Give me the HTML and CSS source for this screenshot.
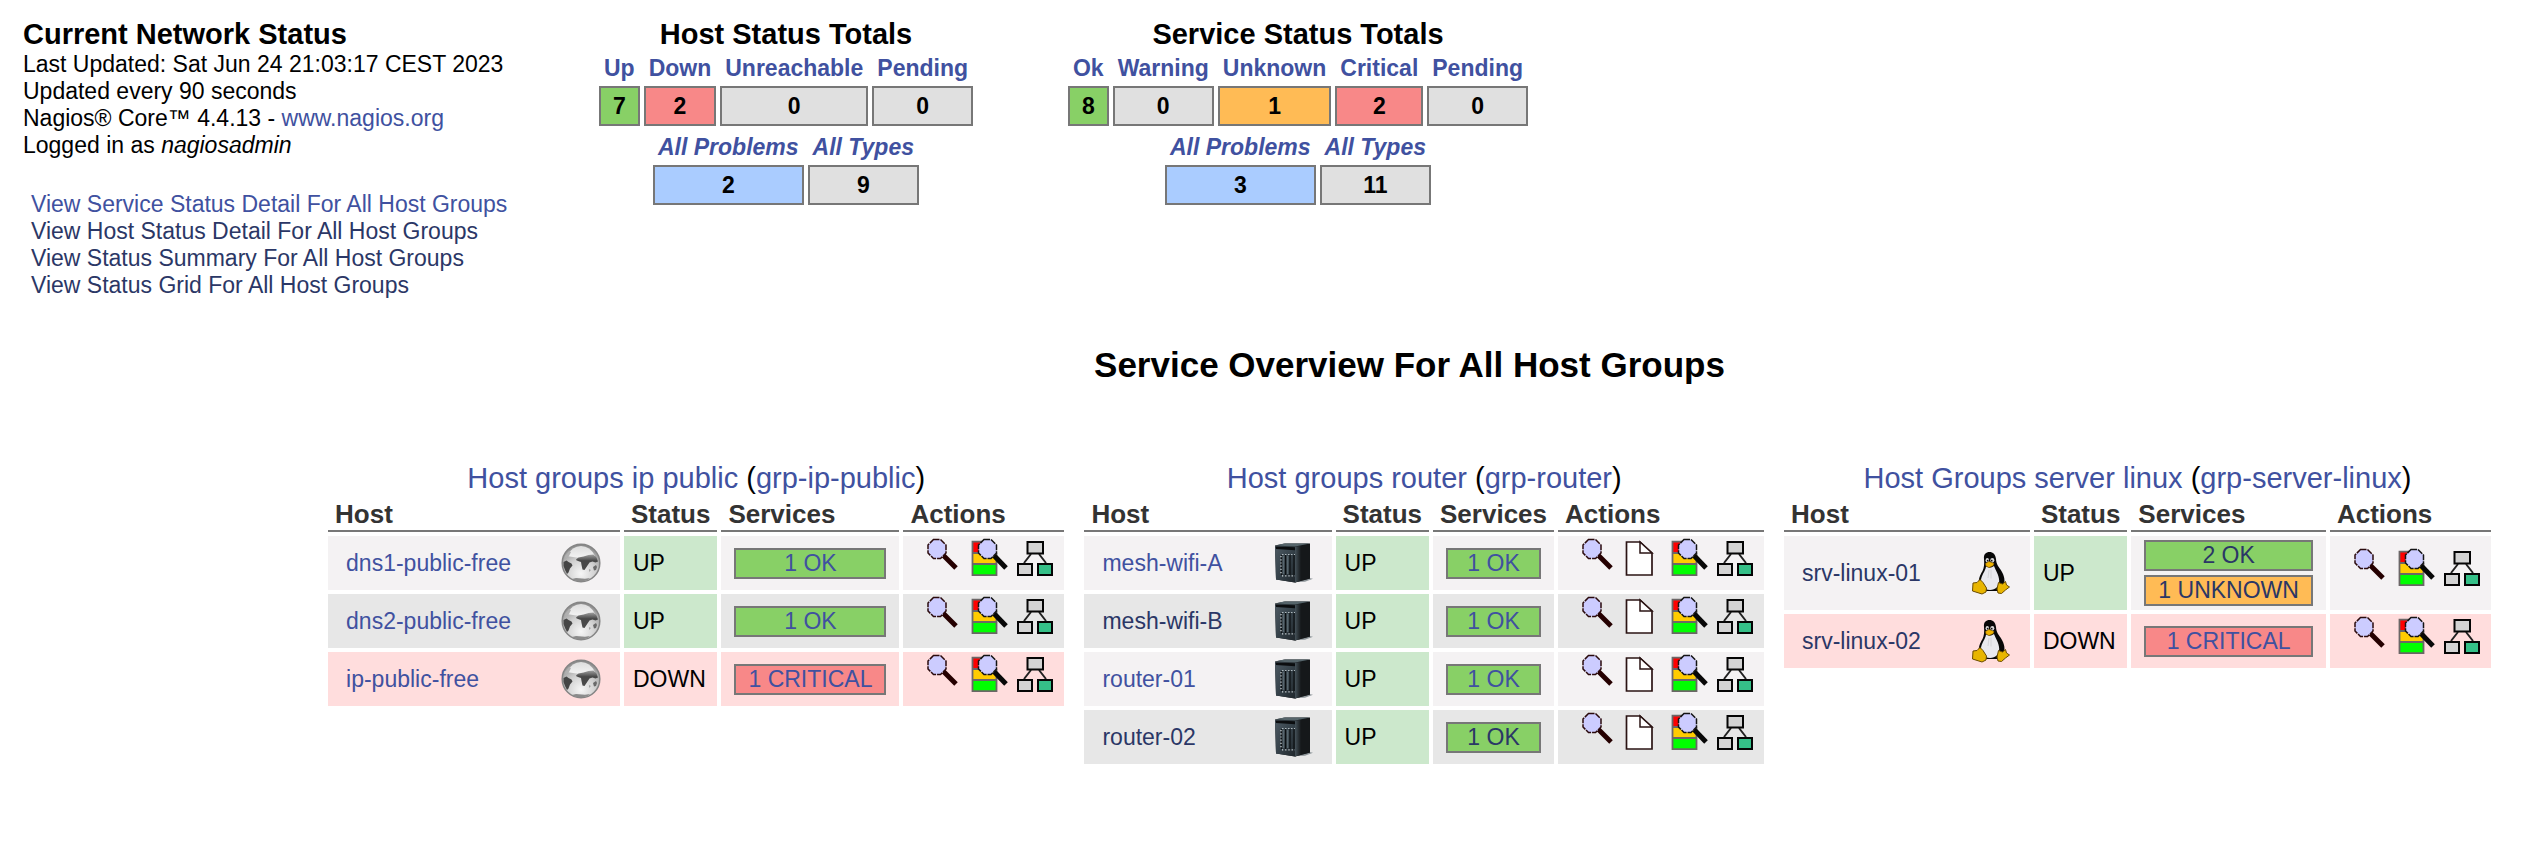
FILE: index.html
```html
<!DOCTYPE html>
<html lang="en">
<head>
<meta charset="utf-8">
<title>Current Network Status</title>
<link rel="stylesheet" href="styles.css">
</head>
<body>
<svg class="sprite" aria-hidden="true">
  <defs>
    <radialGradient id="globe-fill" cx="50%" cy="78%" r="75%">
      <stop offset="0" stop-color="#f6f6f6"/>
      <stop offset="0.5" stop-color="#d2d2d2"/>
      <stop offset="0.85" stop-color="#a2a2a2"/>
      <stop offset="1" stop-color="#8a8a8a"/>
    </radialGradient>
    <linearGradient id="globe-shine" x1="0" y1="0" x2="0" y2="1">
      <stop offset="0" stop-color="#dddddd"/>
      <stop offset="1" stop-color="#f4f4f4"/>
    </linearGradient>
    <linearGradient id="land" x1="0" y1="0" x2="0" y2="1">
      <stop offset="0" stop-color="#a0a0a0"/>
      <stop offset="0.4" stop-color="#484848"/>
      <stop offset="1" stop-color="#4a4a4a"/>
    </linearGradient>
    <linearGradient id="front" x1="0" y1="0" x2="1" y2="1">
      <stop offset="0" stop-color="#4d5a63"/>
      <stop offset="0.5" stop-color="#36424a"/>
      <stop offset="1" stop-color="#20272c"/>
    </linearGradient>
    <linearGradient id="shade" x1="0" y1="0" x2="1" y2="0">
      <stop offset="0" stop-color="#45525a"/>
      <stop offset="1" stop-color="#45525a" stop-opacity="0"/>
    </linearGradient>
  </defs>
  <symbol id="globe" viewBox="0 0 40 40">
    <circle cx="20" cy="20" r="18.8" fill="url(#globe-fill)" stroke="#858585" stroke-width="1.5"/>
    <path d="M6 13Q11 3 20 3t14 10Q29 16 20 15T6 13z" fill="url(#globe-shine)"/>
    <path d="M2.500 19l3-1.500 2 1.500 3 1.500 1 2-2.500 3-1.500 4-1.500 1.500-2-4-1.500-4z" fill="#454545"/>
    <path d="M4 13l4-5 2 1-2 4-3 3z" fill="#b0b0b0"/>
    <path d="M15.500 16l2-1.500 5-1 5-1.500 5-.5 3 3 1.500 4-2.500 1-3-1-3 1-2 3-3 4.500-2-.5-1-4.500-.5-3-3-1-2-1z" fill="url(#land)"/>
    <path d="M32 24l3-2 1 2-1 3-2 .5zM28.500 26l1 1-1 2z" fill="#6a6a6a"/>
    <path d="M11 36l4-1 9 .8 5-.8-3 2.500-6 1-6-.8z" fill="#8b8b8b"/>
  </symbol>
  <symbol id="server" viewBox="0 0 40 40">
    <path d="M24 39l12-4 4 .7-8 3z" fill="#59656b" opacity="0.65"/>
    <path d="M2 2.500L12 .5h25v35L22 39.500 3 36.500z" fill="#171b1e"/>
    <path d="M2 3l20 .8v35.700l-19-3z" fill="url(#front)"/>
    <path d="M22 3.800L37 1v34.500l-15 4z" fill="#15181a"/>
    <path d="M22 3.800l6-1v35l-6 1.700z" fill="url(#shade)"/>
    <path d="M2 2.500L11 .5h26l-15 3z" fill="#56656b"/>
    <path d="M2.500 3.500l19.500.7v3L3 6z" fill="#0b0d0f"/>
    <path d="M8.500 12v20M12.500 11.500v20.500M17 12v20M21 12v20" stroke="#0c1012" stroke-width="1.200" fill="none"/>
    <path d="M9 11.500h13" stroke="#aeb8bc" stroke-width="1" stroke-dasharray="1.500 1.500"/>
    <path d="M8 13v19M9 32.800h13" stroke="#d3dadd" stroke-width="1.200" stroke-dasharray="1.200 2" fill="none"/>
    <path d="M10.500 13v18M14.700 13v18" stroke="#58666d" stroke-width="1.500"/>
  </symbol>
  <symbol id="tux" viewBox="0 0 40 44">
    <path d="M13 8C12.500 3 15 1 18.500 1S24.500 3.500 25 8c.3 5 2 7 4.500 10.500 3 4.500 5 9.500 3.500 15L30 40H11L8 33c-1-4 1-9 3.500-13C13 17 13.500 13 13 8z" fill="#080808"/>
    <path d="M15 15.500q4 2.500 8-.5c1.500 4 5 9 5.200 14.500 0 6-3.700 9.500-9.200 9.500S9.500 35 10 29c.5-5 4.500-9 5-13.500z" fill="#e9e9ee"/>
    <path d="M18 19l-1 8M20 18.500v9" stroke="#d4d4d8" stroke-width="1"/>
    <ellipse cx="16.300" cy="9.300" rx="1.700" ry="2.300" fill="#d8d8d8"/>
    <ellipse cx="21.300" cy="9.300" rx="2" ry="2.400" fill="#d8d8d8"/>
    <circle cx="16.700" cy="9.700" r=".9" fill="#111"/>
    <circle cx="20.700" cy="9.700" r=".9" fill="#111"/>
    <path d="M14.500 12.500l3.500-2 5 2-.8 2L18 16.500l-3-1.500z" fill="#f0b400" stroke="#8a6200" stroke-width=".5"/>
    <path d="M2 32l4-.5 3-3 3 3 3.500 5.500-.5 4-4 2-9.500-3z" fill="#e8b500" stroke="#6b4c00" stroke-width="1"/>
    <path d="M27.500 31.500l4 1.500 3-2.500 1 3.500 3 2-4 3-4 3.500-3.500-.5-1-4z" fill="#e8b500" stroke="#6b4c00" stroke-width="1"/>
  </symbol>
  <symbol id="magnifier" viewBox="0 0 38 40">
    <path d="M18.500 18.500L31 31" stroke="#250000" stroke-width="5"/>
    <path d="M8.500 2.500h7l5.500 5.500v8l-5.500 5.500h-7L3 16V8z" fill="#ccccff" stroke="#2a0a0c" stroke-width="1.500" stroke-dasharray="6 1"/>
  </symbol>
  <symbol id="document" viewBox="0 0 38 40">
    <path d="M1.500 5H15l12 11v22H1.500z" fill="#ffffff" stroke="#2b1414" stroke-width="1.700"/>
    <path d="M15 5v11h12z" fill="#ffffff" stroke="#2b1414" stroke-width="1.500"/>
  </symbol>
  <symbol id="status" viewBox="0 0 38 40">
    <path d="M2.500 5H12v11H2.500z" fill="#ff0000"/>
    <path d="M2.500 16h24v11h-24z" fill="#ffcc00"/>
    <path d="M2.500 27h24v11h-24z" fill="#00ff00"/>
    <path d="M12 4.700H2.500v33.500h24V16M2.500 16h24M2.500 27h24" fill="none" stroke="#6b6666" stroke-width="1.800"/>
    <path d="M24 18.500L36 31" stroke="#080808" stroke-width="5"/>
    <path d="M14 2.500h7l5.500 5.500v8L21 21.500h-7L8.500 16V8z" fill="#ccccff" stroke="#141414" stroke-width="1.500" stroke-dasharray="6 1"/>
  </symbol>
  <symbol id="tree" viewBox="0 0 38 40">
    <path d="M16 17l-7 9M24 17l7 9" stroke="#222222" stroke-width="2"/>
    <path d="M12.500 5h15.500v11.500H12.500zM3 27h14v11H3z" fill="#d3d3d3" stroke="#050505" stroke-width="2"/>
    <path d="M23 27h14v11H23z" fill="#35c088" stroke="#050505" stroke-width="2"/>
  </symbol>
</svg>

<header class="summary">
  <section class="info">
    <h2 class="heading">Current Network Status</h2>
    <p>Last Updated: Sat Jun 24 21:03:17 CEST 2023</p>
    <p>Updated every 90 seconds</p>
    <p>Nagios® Core™ 4.4.13 - <a href="#">www.nagios.org</a></p>
    <p>Logged in as <i>nagiosadmin</i></p>
    <nav class="views">
      <a href="#">View Service Status Detail For All Host Groups</a>
      <a href="#" class="seen">View Host Status Detail For All Host Groups</a>
      <a href="#" class="seen">View Status Summary For All Host Groups</a>
      <a href="#" class="seen">View Status Grid For All Host Groups</a>
    </nav>
  </section>

  <section class="totals">
    <h2 class="heading">Host Status Totals</h2>
    <table class="counts">
      <tr><th><a href="#">Up</a></th><th><a href="#">Down</a></th><th><a href="#">Unreachable</a></th><th><a href="#">Pending</a></th></tr>
      <tr><td class="ok">7</td><td class="critical">2</td><td>0</td><td>0</td></tr>
    </table>
    <table class="counts overall">
      <tr><th><a href="#">All Problems</a></th><th><a href="#">All Types</a></th></tr>
      <tr><td class="problems">2</td><td>9</td></tr>
    </table>
  </section>

  <section class="totals">
    <h2 class="heading">Service Status Totals</h2>
    <table class="counts">
      <tr><th><a href="#">Ok</a></th><th><a href="#">Warning</a></th><th><a href="#">Unknown</a></th><th><a href="#">Critical</a></th><th><a href="#">Pending</a></th></tr>
      <tr><td class="ok">8</td><td>0</td><td class="unknown">1</td><td class="critical">2</td><td>0</td></tr>
    </table>
    <table class="counts overall">
      <tr><th><a href="#">All Problems</a></th><th><a href="#">All Types</a></th></tr>
      <tr><td class="problems">3</td><td>11</td></tr>
    </table>
  </section>
</header>

<main class="overview">
  <h1 class="title">Service Overview For All Host Groups</h1>
  <div class="groups">
    <table class="group">
      <caption><a href="#">Host groups ip public</a> (<a href="#">grp-ip-public</a>)</caption>
      <thead><tr><th>Host</th><th>Status</th><th>Services</th><th>Actions</th></tr></thead>
      <tbody>
        <tr class="even">
          <td><div class="host"><a href="#">dns1-public-free</a><svg class="host-icon"><use href="#globe"/></svg></div></td>
          <td class="state up">UP</td>
          <td class="services"><a href="#" class="badge ok">1 OK</a></td>
          <td><div class="actions"><a href="#" aria-label="Details"><svg><use href="#magnifier"/></svg></a><a href="#" aria-label="Services"><svg><use href="#status"/></svg></a><a href="#" aria-label="Map"><svg><use href="#tree"/></svg></a></div></td>
        </tr>
        <tr class="odd">
          <td><div class="host"><a href="#">dns2-public-free</a><svg class="host-icon"><use href="#globe"/></svg></div></td>
          <td class="state up">UP</td>
          <td class="services"><a href="#" class="badge ok">1 OK</a></td>
          <td><div class="actions"><a href="#" aria-label="Details"><svg><use href="#magnifier"/></svg></a><a href="#" aria-label="Services"><svg><use href="#status"/></svg></a><a href="#" aria-label="Map"><svg><use href="#tree"/></svg></a></div></td>
        </tr>
        <tr class="down">
          <td><div class="host"><a href="#">ip-public-free</a><svg class="host-icon"><use href="#globe"/></svg></div></td>
          <td class="state">DOWN</td>
          <td class="services"><a href="#" class="badge critical">1 CRITICAL</a></td>
          <td><div class="actions"><a href="#" aria-label="Details"><svg><use href="#magnifier"/></svg></a><a href="#" aria-label="Services"><svg><use href="#status"/></svg></a><a href="#" aria-label="Map"><svg><use href="#tree"/></svg></a></div></td>
        </tr>
      </tbody>
    </table>

    <table class="group">
      <caption><a href="#">Host groups router</a> (<a href="#">grp-router</a>)</caption>
      <thead><tr><th>Host</th><th>Status</th><th>Services</th><th>Actions</th></tr></thead>
      <tbody>
        <tr class="even">
          <td><div class="host"><a href="#">mesh-wifi-A</a><svg class="host-icon"><use href="#server"/></svg></div></td>
          <td class="state up">UP</td>
          <td class="services"><a href="#" class="badge ok">1 OK</a></td>
          <td><div class="actions"><a href="#" aria-label="Details"><svg><use href="#magnifier"/></svg></a><a href="#" aria-label="Notes"><svg><use href="#document"/></svg></a><a href="#" aria-label="Services"><svg><use href="#status"/></svg></a><a href="#" aria-label="Map"><svg><use href="#tree"/></svg></a></div></td>
        </tr>
        <tr class="odd">
          <td><div class="host"><a href="#" class="seen">mesh-wifi-B</a><svg class="host-icon"><use href="#server"/></svg></div></td>
          <td class="state up">UP</td>
          <td class="services"><a href="#" class="badge ok">1 OK</a></td>
          <td><div class="actions"><a href="#" aria-label="Details"><svg><use href="#magnifier"/></svg></a><a href="#" aria-label="Notes"><svg><use href="#document"/></svg></a><a href="#" aria-label="Services"><svg><use href="#status"/></svg></a><a href="#" aria-label="Map"><svg><use href="#tree"/></svg></a></div></td>
        </tr>
        <tr class="even">
          <td><div class="host"><a href="#">router-01</a><svg class="host-icon"><use href="#server"/></svg></div></td>
          <td class="state up">UP</td>
          <td class="services"><a href="#" class="badge ok">1 OK</a></td>
          <td><div class="actions"><a href="#" aria-label="Details"><svg><use href="#magnifier"/></svg></a><a href="#" aria-label="Notes"><svg><use href="#document"/></svg></a><a href="#" aria-label="Services"><svg><use href="#status"/></svg></a><a href="#" aria-label="Map"><svg><use href="#tree"/></svg></a></div></td>
        </tr>
        <tr class="odd">
          <td><div class="host"><a href="#" class="seen">router-02</a><svg class="host-icon"><use href="#server"/></svg></div></td>
          <td class="state up">UP</td>
          <td class="services"><a href="#" class="badge ok seen">1 OK</a></td>
          <td><div class="actions"><a href="#" aria-label="Details"><svg><use href="#magnifier"/></svg></a><a href="#" aria-label="Notes"><svg><use href="#document"/></svg></a><a href="#" aria-label="Services"><svg><use href="#status"/></svg></a><a href="#" aria-label="Map"><svg><use href="#tree"/></svg></a></div></td>
        </tr>
      </tbody>
    </table>

    <table class="group">
      <caption><a href="#">Host Groups server linux</a> (<a href="#">grp-server-linux</a>)</caption>
      <thead><tr><th>Host</th><th>Status</th><th>Services</th><th>Actions</th></tr></thead>
      <tbody>
        <tr class="even">
          <td><div class="host"><a href="#" class="seen">srv-linux-01</a><svg class="host-icon tall"><use href="#tux"/></svg></div></td>
          <td class="state up">UP</td>
          <td class="services"><a href="#" class="badge ok seen">2 OK</a><a href="#" class="badge unknown seen">1 UNKNOWN</a></td>
          <td><div class="actions"><a href="#" aria-label="Details"><svg><use href="#magnifier"/></svg></a><a href="#" aria-label="Services"><svg><use href="#status"/></svg></a><a href="#" aria-label="Map"><svg><use href="#tree"/></svg></a></div></td>
        </tr>
        <tr class="down">
          <td><div class="host"><a href="#" class="seen">srv-linux-02</a><svg class="host-icon tall"><use href="#tux"/></svg></div></td>
          <td class="state">DOWN</td>
          <td class="services"><a href="#" class="badge critical">1 CRITICAL</a></td>
          <td><div class="actions"><a href="#" aria-label="Details"><svg><use href="#magnifier"/></svg></a><a href="#" aria-label="Services"><svg><use href="#status"/></svg></a><a href="#" aria-label="Map"><svg><use href="#tree"/></svg></a></div></td>
        </tr>
      </tbody>
    </table>
  </div>
</main>
</body>
</html>
```

FILE: styles.css
```css
body {
  margin: 0;
  background: #ffffff;
  color: #000000;
  font: 23px/27px Arial, "Liberation Sans", sans-serif;
}

a {
  color: #4051a0;
  text-decoration: none;
}

a.seen {
  color: #2b3766;
}

p {
  margin: 0;
}

.sprite {
  position: absolute;
  width: 0;
  height: 0;
}

/* Status summary */

.summary {
  display: grid;
  grid-template-columns:
    minmax(max-content, 507fr) minmax(max-content, 512fr)
    minmax(max-content, 512fr) 975fr;
  padding: 18px 0 0 23px;
}

.heading {
  margin: 0;
  font-size: 29px;
  line-height: 32px;
}

.info .heading {
  line-height: 33px;
}

.views {
  display: flex;
  flex-direction: column;
  align-items: flex-start;
  padding: 32px 0 0 8px;
}

.totals {
  display: flex;
  flex-direction: column;
  align-items: center;
}

.counts {
  border-spacing: 4px;
  text-align: center;
}

.counts th {
  padding: 0 5px;
  font-size: 23px;
  line-height: 28px;
}

.counts td {
  padding: 4px 0;
  border: 2px solid #777777;
  background: #e0e0e0;
  font-weight: bold;
  line-height: 28px;
}

.overall {
  margin-top: -1px;
  font-style: italic;
}

.overall td {
  font-style: normal;
}

.counts .ok,
.badge.ok {
  background: #88d066;
}

.counts .critical,
.badge.critical {
  background: #f88888;
}

.counts .unknown,
.badge.unknown {
  background: #ffbb55;
}

.counts .problems {
  background: #aaccff;
}

/* Host group overview */

.overview {
  padding: 45px 0 0 290px;
}

.title {
  margin: 0;
  font-size: 35px;
  line-height: 42px;
  text-align: center;
}

.groups {
  display: flex;
  justify-content: center;
  align-items: flex-start;
  gap: 12px;
  padding-top: 76px;
}

.group {
  border-spacing: 4px;
}

.group caption {
  font-size: 29px;
  line-height: 33px;
}

.group th {
  padding: 0 7px 1px;
  border-bottom: 2px solid #777777;
  color: #333333;
  font-size: 26px;
  line-height: 30px;
  text-align: left;
}

.group td {
  box-sizing: border-box;
  height: 54px;
  padding: 0;
}

.even td {
  background: #f4f2f3;
}

.odd td {
  background: #e7e7e7;
}

.down td {
  background: #ffdddd;
}

.group .up {
  background: #cce8cc;
}

.host {
  display: flex;
  align-items: center;
  justify-content: space-between;
  gap: 50px;
  padding: 0 19px 0 18px;
}

.host-icon {
  width: 40px;
  height: 40px;
}

.host-icon.tall {
  height: 44px;
}

.group .state {
  padding: 0 9px;
}

.group .services {
  padding: 4px 13px;
}

.badge {
  display: block;
  padding: 0 12px;
  border: 2px solid #777777;
  text-align: center;
}

.badge + .badge {
  margin-top: 4px;
}

.actions {
  display: flex;
  gap: 7px;
  padding: 0 11px 12px 22px;
}

.actions a,
.actions svg {
  display: block;
  width: 38px;
  height: 40px;
}
```
